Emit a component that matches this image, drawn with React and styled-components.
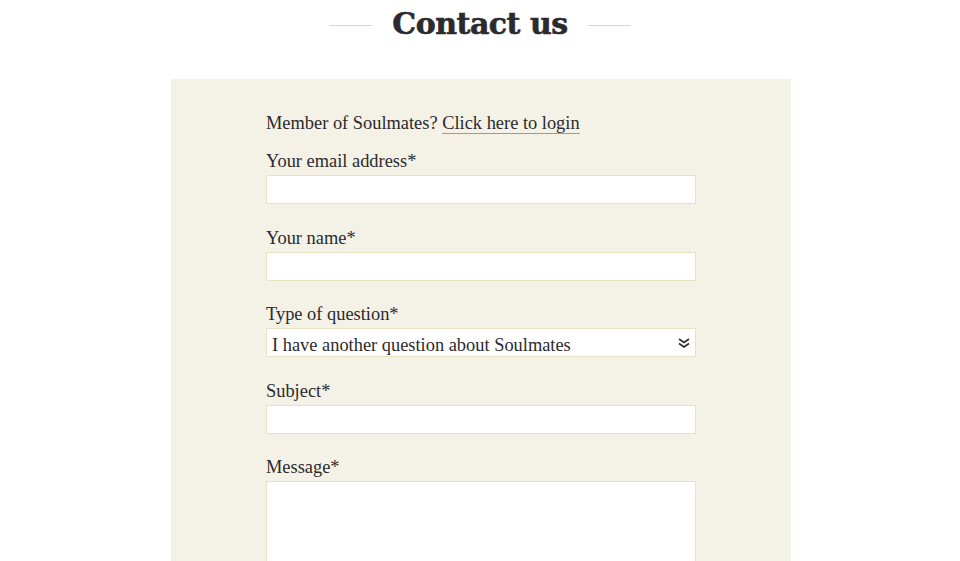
import styled, { createGlobalStyle } from "styled-components";

const GlobalStyle = createGlobalStyle`
  html, body {
    margin: 0;
    padding: 0;
    background: #fff;
  }

  body {
    font-family: "Liberation Serif", "DejaVu Serif", serif;
    color: #2b2a2e;
  }
`;

const Page = styled.div`
  width: 960px;
  height: 561px;
  overflow: hidden;
`;

const TitleRow = styled.header`
  display: flex;
  align-items: center;
  justify-content: center;
  gap: 20px;

  height: 50px;
  margin-bottom: 29px;
`;

const Rule = styled.span`
  display: block;
  width: 43px;
  height: 1px;
  background: #d8d6c2;
`;

const Title = styled.h1`
  margin: 0;
  padding-bottom: 3px;

  font-family: "DejaVu Serif", serif;
  font-weight: 700;
  font-size: 30px;
  letter-spacing: -0.5px;
  -webkit-text-stroke: 0.6px #2b2a2e;
  color: #2b2a2e;
`;

const Panel = styled.section`
  width: 620px;
  height: 482px;
  margin: 0 0 0 171px;
  padding-top: 32px;
  box-sizing: border-box;

  background: #f4f2e7;
`;

const Form = styled.form`
  width: 430px;
  margin: 0 auto;
`;

const Intro = styled.p`
  margin: 0 0 15px;
  font-size: 18.4px;
  line-height: 24px;

  a {
    color: inherit;
    text-decoration: none;
    border-bottom: 1px solid #9a9a9a;
  }
`;

const Field = styled.div`
  margin-bottom: 22.5px;
`;

const Label = styled.label`
  display: block;
  margin-bottom: 3px;
  font-size: 18.4px;
  line-height: 22px;
`;

const Input = styled.input`
  display: block;
  width: 100%;
  height: 29px;
  box-sizing: border-box;
  margin: 0;
  padding: 0 6px;

  background: #fff;
  border: 1px solid #e6e2c3;
  border-radius: 0;
  outline: none;

  font-family: inherit;
  font-size: 18px;
`;

const SelectBox = styled.div`
  position: relative;
  height: 29px;
  box-sizing: border-box;
  padding: 4px 30px 0 5px;

  display: flex;
  align-items: center;

  background: #fff;
  border: 1px solid #e6e2c3;

  font-size: 18.4px;
  line-height: 24px;
`;

const Chevron = styled.svg`
  position: absolute;
  right: 4px;
  top: 8px;
`;

const TextArea = styled.textarea`
  display: block;
  width: 100%;
  height: 120px;
  box-sizing: border-box;
  margin: 0;

  background: #fff;
  border: 1px solid #e6e2c3;
  border-radius: 0;
  resize: none;
  outline: none;
`;

export default function App() {
  return (
    <Page>
      <GlobalStyle />
      <TitleRow>
        <Rule />
        <Title>Contact us</Title>
        <Rule />
      </TitleRow>

      <Panel>
        <Form onSubmit={(e) => e.preventDefault()}>
          <Intro>
            Member of Soulmates? <a href="#login">Click here to login</a>
          </Intro>

          <Field>
            <Label htmlFor="email">Your email address*</Label>
            <Input id="email" type="email" name="email" />
          </Field>

          <Field>
            <Label htmlFor="name">Your name*</Label>
            <Input id="name" type="text" name="name" />
          </Field>

          <Field>
            <Label>Type of question*</Label>
            <SelectBox>
              I have another question about Soulmates
              <Chevron width="14" height="12" viewBox="0 0 14 12">
                <path
                  d="M2 2 L7 5.5 L12 2 M2 6.5 L7 10 L12 6.5"
                  fill="none"
                  stroke="#2b2a2e"
                  strokeWidth="1.6"
                />
              </Chevron>
            </SelectBox>
          </Field>

          <Field>
            <Label htmlFor="subject">Subject*</Label>
            <Input id="subject" type="text" name="subject" />
          </Field>

          <Field>
            <Label htmlFor="message">Message*</Label>
            <TextArea id="message" name="message" />
          </Field>
        </Form>
      </Panel>
    </Page>
  );
}
